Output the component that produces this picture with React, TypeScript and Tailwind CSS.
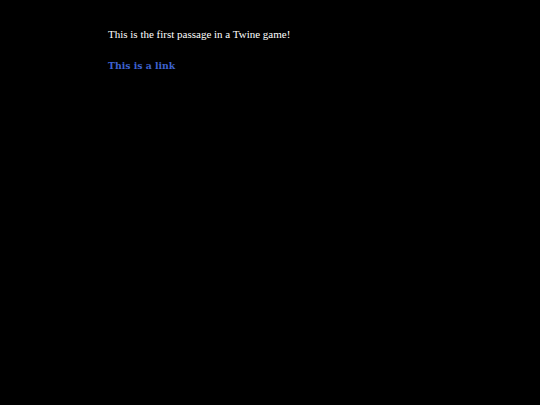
export default function App() {
  return (
    <div className="min-h-[405px] w-full bg-black text-white" style={{ fontFamily: '"Liberation Serif", serif' }}>
      <div className="pl-[108px] pt-[26px] text-[11px] leading-[16px]">
        <p>This is the first passage in a Twine game!</p>
        <p className="mt-[15px]">
          <a className="font-bold text-[#3d62cf] text-[9.3px]" style={{ fontFamily: '"DejaVu Serif", serif' }}>
            This is a link
          </a>
        </p>
      </div>
    </div>
  );
}
